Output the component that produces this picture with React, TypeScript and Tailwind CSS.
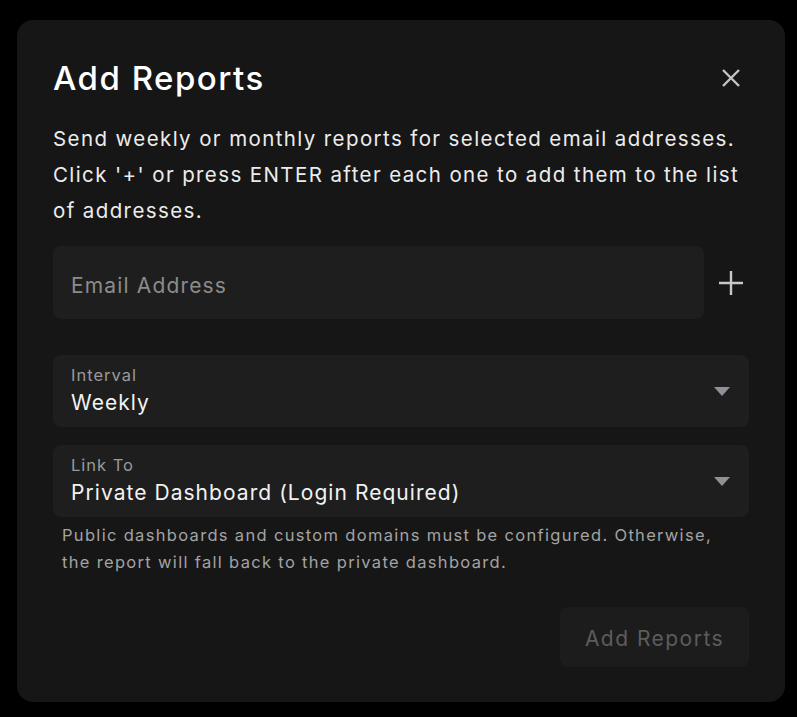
import React, { useState } from 'react';

const font = { fontFamily: 'Inter, "Noto Sans", sans-serif' };

const SelectField: React.FC<{ label: string; value: string }> = ({ label, value }) => (
    <div className="flex h-[72px] items-center justify-between rounded-lg bg-[#1e1e1e] pl-[18px] pr-[19px]">
        <div className="flex flex-col">
            <span className="text-[16.5px] leading-[24px] tracking-[0.06em] text-[#9a9a9a]">{label}</span>
            <span className="text-[21px] leading-[32px] tracking-[0.05em] text-[#f2f2f2]">{value}</span>
        </div>
        <svg width="16" height="9" viewBox="0 0 16 9">
            <path d="M0 0 L16 0 L8 9 Z" fill="#8f9197" />
        </svg>
    </div>
);

const App: React.FC = () => {
    const [email, setEmail] = useState('');

    return (
        <div className="min-h-[717px] bg-black pt-[20px] pl-[17px]" style={font}>
            <div className="w-[768px] h-[682px] rounded-[16px] bg-[#161616] px-[36px] pt-[36px]">
                <div className="flex items-center justify-between">
                    <h2 className="text-[33px] leading-[44px] font-medium tracking-[0.045em] text-white">Add Reports</h2>
                    <button className="mr-[9px] text-[#c4c4c4]">
                        <svg width="18" height="18" viewBox="0 0 18 18" fill="none" stroke="currentColor" strokeWidth="2.4">
                            <path d="M1 1 L17 17 M17 1 L1 17" />
                        </svg>
                    </button>
                </div>
                <p className="mt-[21px] text-[20.5px] leading-[36px] tracking-[0.068em] text-[#ececec]">
                    Send weekly or monthly reports for selected email addresses. Click '+' or press ENTER after each one to add them to the list of addresses.
                </p>
                <div className="mt-[17px] flex items-center gap-[14px]">
                    <input
                        value={email}
                        onChange={e => setEmail(e.target.value)}
                        placeholder="Email Address"
                        className="h-[73px] w-[651px] rounded-lg bg-[#1e1e1e] px-[18px] pt-[5px] text-[21px] tracking-[0.055em] text-white outline-none placeholder:text-[#8c8c8c]"
                    />
                    <button className="text-[#c8c8c8]">
                        <svg width="26" height="26" viewBox="0 0 26 26" fill="none" stroke="currentColor" strokeWidth="2.4">
                            <path d="M13 1 V25 M1 13 H25" />
                        </svg>
                    </button>
                </div>
                <div className="mt-[36px] flex flex-col gap-[18px]">
                    <SelectField label="Interval" value="Weekly" />
                    <SelectField label="Link To" value="Private Dashboard (Login Required)" />
                </div>
                <p className="mt-[5px] px-[9px] text-[16.5px] leading-[27px] tracking-[0.08em] text-[#a3a3a3]">
                    Public dashboards and custom domains must be configured. Otherwise, the report will fall back to the private dashboard.
                </p>
                <div className="mt-[31px] flex justify-end">
                    <button className="h-[60px] w-[189px] rounded-lg bg-[#1c1c1c] pt-[3px] text-[21px] tracking-[0.07em] text-[#5c5c5c]">Add Reports</button>
                </div>
            </div>
        </div>
    );
};

export default App;
